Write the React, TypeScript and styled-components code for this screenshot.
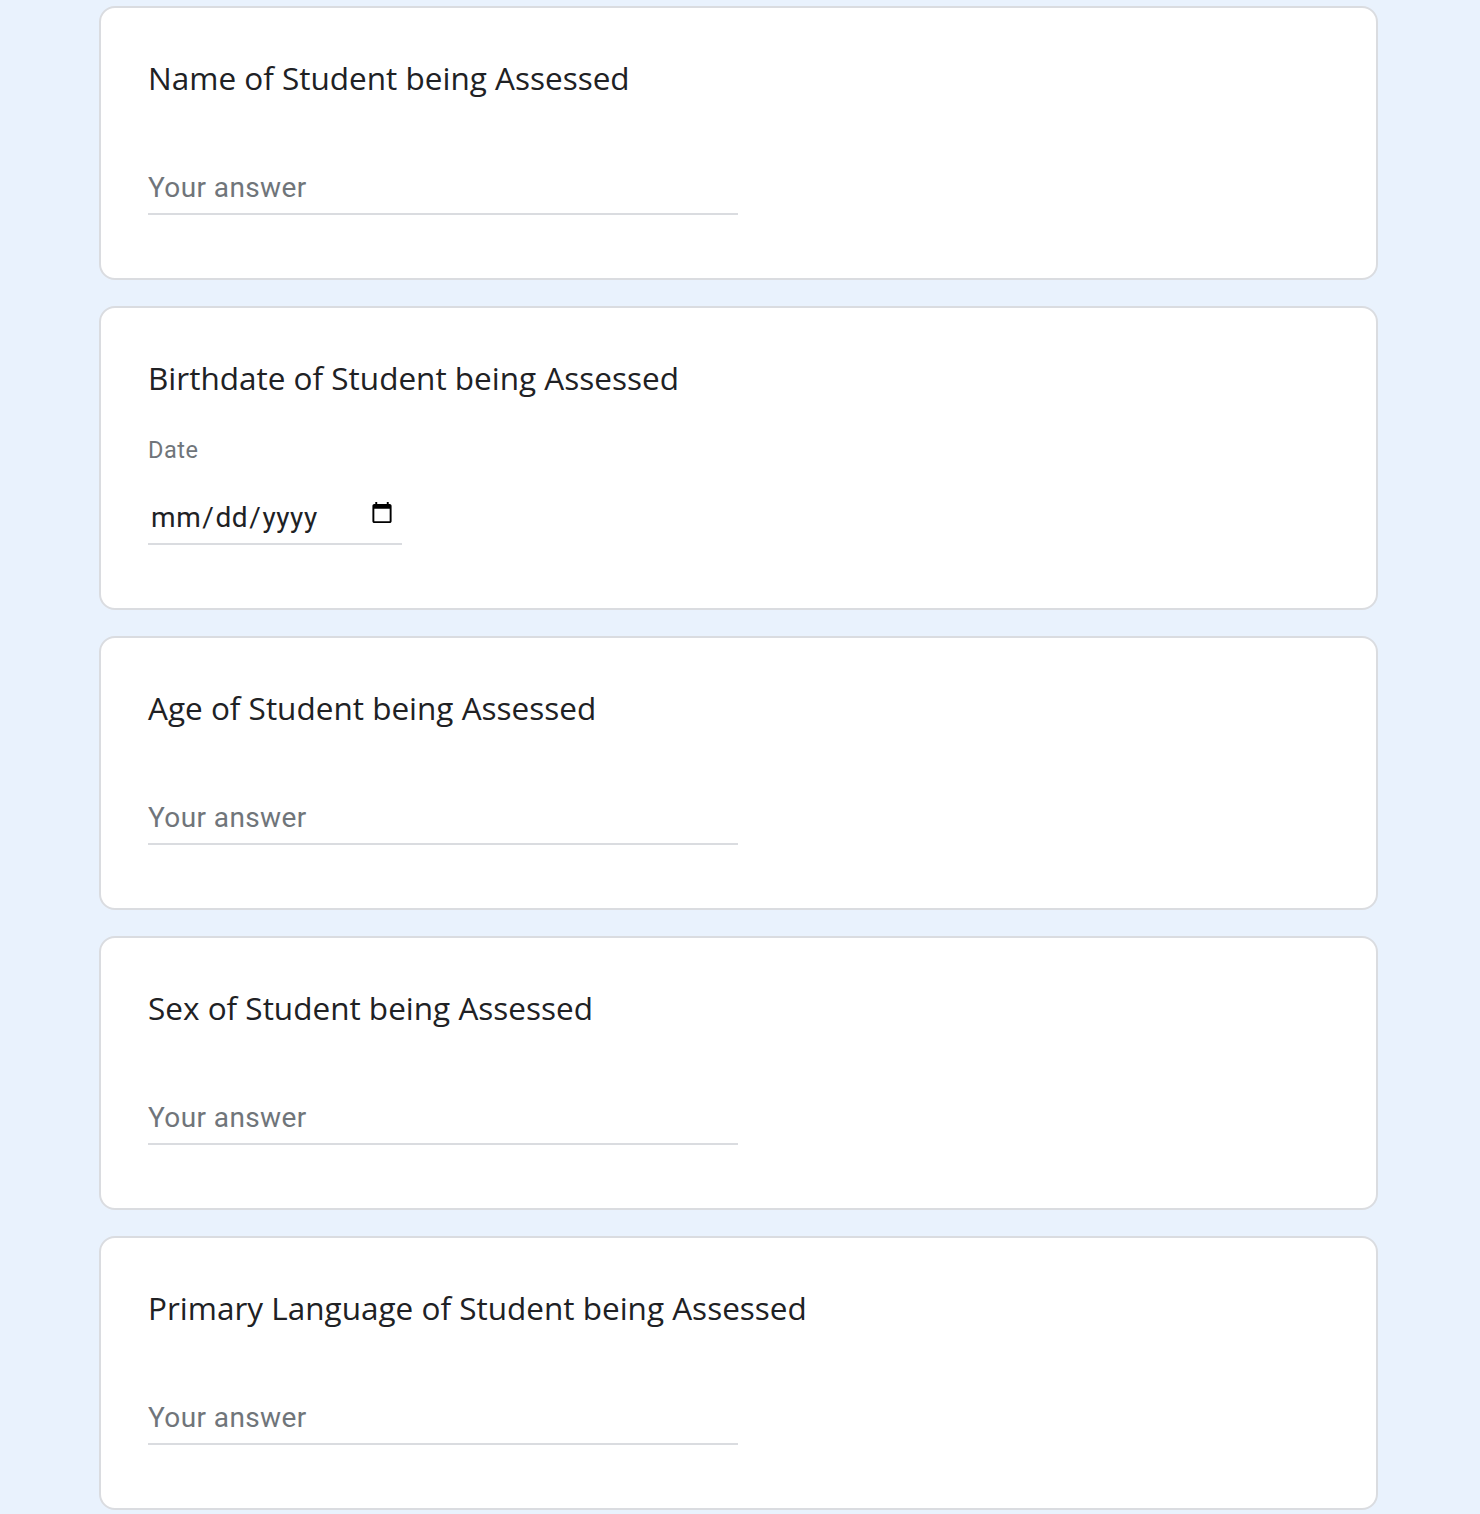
import React from "react";
import styled, { createGlobalStyle } from "styled-components";

const GlobalStyle = createGlobalStyle`
  html, body {
    margin: 0;
    padding: 0;
    background: #e9f2fd;
  }
`;

const Page = styled.div`
  padding: 6px 0 0 99px;
  width: 1279px;
  display: flex;
  flex-direction: column;
  gap: 26px;
`;

const Card = styled.div`
  background: #ffffff;
  border: 2px solid #dadce0;
  border-radius: 16px;
  padding: 46px 47px 63px;
  display: flex;
  flex-direction: column;
  align-items: flex-start;
`;

const Title = styled.div`
  font-family: "Open Sans", Roboto, sans-serif;
  font-size: 31.5px;
  line-height: 48px;
  height: 48px;
  color: #202124;
`;

const SubLabel = styled.div`
  margin-top: 32px;
  font-family: Roboto, "Liberation Sans", sans-serif;
  font-size: 23.5px;
  line-height: 32px;
  height: 32px;
  color: #70757a;
  letter-spacing: 0.5px;
`;

const TextInput = styled.input`
  margin-top: 59px;
  width: 590px;
  height: 52px;
  box-sizing: content-box;
  padding: 0;
  border: none;
  border-bottom: 2px solid #dadce0;
  outline: none;
  font-family: Roboto, "Liberation Sans", sans-serif;
  font-size: 28px;
  letter-spacing: 0.4px;
  color: #202124;
  background: transparent;

  &::placeholder {
    color: #70757a;
  }
`;

const DateInput = styled.input`
  margin-top: 25px;
  width: 252px;
  height: 52px;
  box-sizing: content-box;
  padding: 0 0 0 2px;
  border: none;
  border-bottom: 2px solid #dadce0;
  outline: none;
  font-family: Roboto, "Liberation Sans", sans-serif;
  font-size: 28px;
  letter-spacing: 0.6px;
  color: #202124;
  background: transparent;

  &::-webkit-calendar-picker-indicator {
    width: 24px;
    height: 24px;
    margin-right: 6px;
    position: relative;
    top: -4px;
  }
`;

const questions = [
  "Name of Student being Assessed",
  "Birthdate of Student being Assessed",
  "Age of Student being Assessed",
  "Sex of Student being Assessed",
  "Primary Language of Student being Assessed",
];

export default function App() {
  return (
    <>
      <GlobalStyle />
      <Page>
        {questions.map((q) => (
          <Card key={q}>
            <Title>{q}</Title>
            {q.startsWith("Birthdate") ? (
              <>
                <SubLabel>Date</SubLabel>
                <DateInput type="date" />
              </>
            ) : (
              <TextInput type="text" placeholder="Your answer" />
            )}
          </Card>
        ))}
      </Page>
    </>
  );
}
